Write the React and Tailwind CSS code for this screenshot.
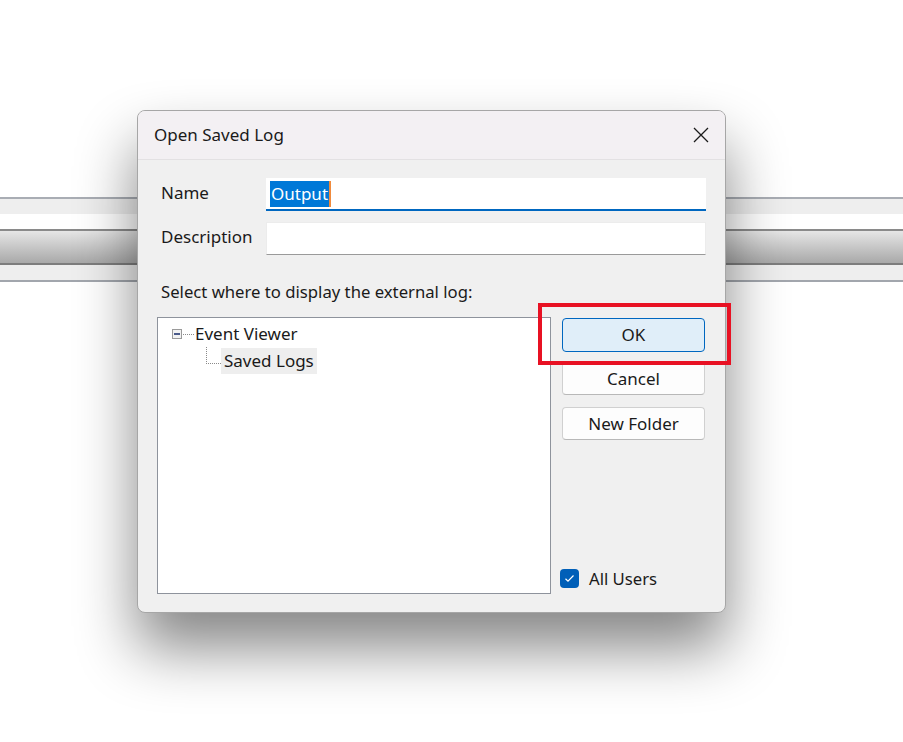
import React from "react";

const font = { fontFamily: '"Noto Sans", "Open Sans", Arial, sans-serif' };

function Btn({ children, primary, h }) {
  return (
    <div
      className={
        "w-[143px] flex items-center justify-center rounded-[4px] text-[17px] text-[#1a1a1a] " +
        (h === 34 ? "h-[34px] " : "h-[33px] ") +
        (primary
          ? "bg-[#e0eef9] border border-[#0067c0]"
          : "bg-[#fdfdfd] border border-[#d0d0d0] border-b-[#b8b8b8]")
      }
    >
      {children}
    </div>
  );
}

export default function App() {
  return (
    <div className="relative w-[903px] h-[742px] bg-white overflow-hidden" style={font}>
      {/* background band */}
      <div className="flex flex-col pt-[197px]">
        <div className="h-[2px] bg-[#a9adb4]" />
        <div className="h-[15px] bg-[#eeeeee]" />
        <div className="h-[15px] bg-white" />
        <div className="h-[2px] bg-[#8a8a8a]" />
        <div className="h-[32px] bg-gradient-to-b from-[#e6e6e6] to-[#a9a9a9]" />
        <div className="h-[2px] bg-[#7d7d7d]" />
        <div className="h-[15px] bg-[#eeeeee]" />
        <div className="h-[2px] bg-[#a2a6ad]" />
      </div>

      {/* dialog */}
      <div className="absolute left-[137px] top-[110px] w-[589px] h-[503px] rounded-[8px] border border-[#a6a6a6] bg-[#f0f0f0] shadow-[0_35px_60px_rgba(0,0,0,0.48)] flex flex-col overflow-hidden">
        <div className="h-[49px] shrink-0 bg-[#f3f0f3] border-b border-[#e3e1e3] flex items-center justify-between pl-[16px] pr-[14px]">
          <span className="text-[17px] text-[#1a1a1a] -mt-[1px]">Open Saved Log</span>
          <svg width="18" height="18" viewBox="0 0 18 18" className="mr-[1px]">
            <path d="M2 2 L16 16 M16 2 L2 16" stroke="#1a1a1a" strokeWidth="1.3" fill="none" />
          </svg>
        </div>

        <div className="flex flex-col pl-[23px] pr-[19px] pt-[18px]">
          <div className="flex items-center h-[33px]">
            <span className="w-[105px] text-[17px] text-[#1a1a1a] mb-[3px]">Name</span>
            <div className="flex-1 h-[33px] bg-white border-b-2 border-[#0067c0] flex items-center pl-[4px]">
              <span className="bg-[#0078d7] text-white text-[17px] leading-[26px] px-[1px] border-r-2 border-[#f08a3c] mt-[1px]">Output</span>
            </div>
          </div>
          <div className="flex items-center h-[33px] mt-[11px]">
            <span className="w-[105px] text-[17px] text-[#1a1a1a] mb-[3px]">Description</span>
            <div className="flex-1 h-[33px] bg-white border border-[#ececec] border-b-[#9a9a9a]" />
          </div>
          <div className="mt-[25px] text-[16.7px] text-[#1a1a1a] leading-[24px]">
            Select where to display the external log:
          </div>
        </div>

        <div className="flex pl-[19px] pr-[19px] mt-[13px]">
          <div className="w-[394px] h-[277px] bg-white border border-[#8e939c] relative">
            {/* tree */}
            <div className="flex items-center mt-[4px] ml-[14px] h-[24px]">
              <div className="w-[10px] h-[10px] border border-[#9a9a9a] bg-[#f2f2f2] flex items-center justify-center">
                <div className="w-[6px] h-[1.5px] bg-[#4a5a8a]" />
              </div>
              <div className="w-[11px] border-t border-dotted border-[#8a8a8a] ml-[1px]" />
              <span className="text-[17px] text-[#1a1a1a] ml-[1px]">Event Viewer</span>
            </div>
            <div className="flex items-end ml-[48px] h-[26px] mt-[2px]">
              <div className="w-[15px] h-[17px] border-l border-b border-dotted border-[#8a8a8a] mb-[10px]" />
              <span className="text-[17px] text-[#1a1a1a] bg-[#eeeeee] px-[3px] h-[26px] leading-[26px]">Saved Logs</span>
            </div>
          </div>
          <div className="flex flex-col ml-[11px] w-[143px] pt-[1px]">
            <Btn primary h={34}>OK</Btn>
            <div className="mt-[10px]">
              <Btn>Cancel</Btn>
            </div>
            <div className="mt-[12px]">
              <Btn>New Folder</Btn>
            </div>
            <div className="flex-1" />
            <div className="flex items-center mb-[3px] -ml-[2px]">
              <div className="w-[19px] h-[19px] rounded-[4px] bg-[#005fb8] flex items-center justify-center">
                <svg width="11" height="9" viewBox="0 0 11 9">
                  <path d="M1.5 4.8 L4 7.2 L9.5 1.5" stroke="white" strokeWidth="1.2" fill="none" />
                </svg>
              </div>
              <span className="ml-[10px] text-[16.7px] text-[#1a1a1a]">All Users</span>
            </div>
          </div>
        </div>
      </div>

      {/* red annotation */}
      <div className="absolute left-[538px] top-[303px] w-[193px] h-[62px] border-[4px] border-[#e81123]" />
    </div>
  );
}
